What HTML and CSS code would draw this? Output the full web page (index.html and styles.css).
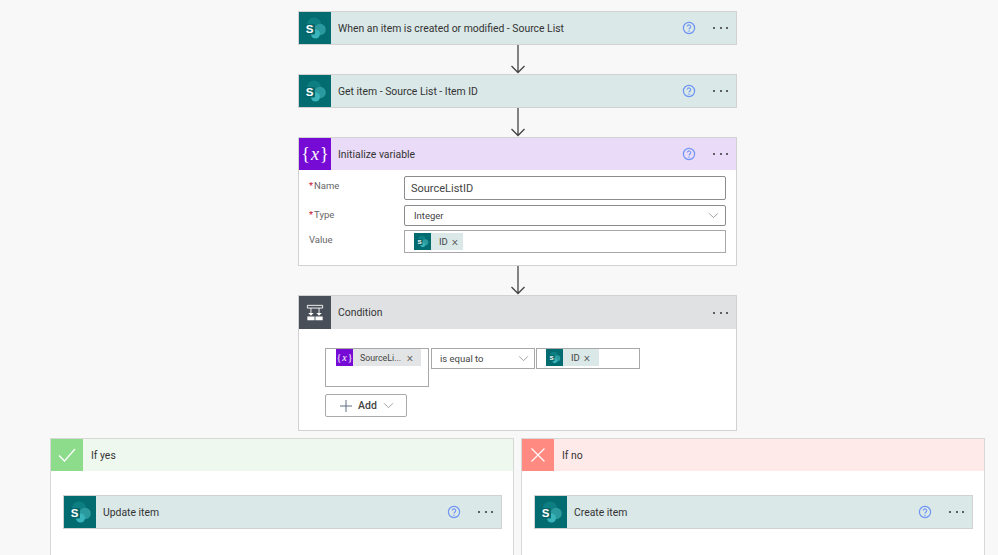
FILE: index.html
```html
<!DOCTYPE html>
<html lang="en">
<head>
    <meta charset="UTF-8">
    <meta name="viewport" content="width=device-width, initial-scale=1.0">
    <title>Flow editor</title>
    <link rel="stylesheet" href="styles.css">
</head>
<body>
    <svg class="defs" width="0" height="0">
        <symbol id="sp" viewBox="0 0 24 24">
            <circle cx="11" cy="8.500" r="7" fill="#0d7f83"/>
            <circle cx="17" cy="13.500" r="5.800" fill="#2a9a9f"/>
            <circle cx="12.500" cy="18" r="4.500" fill="#39b4ba"/>
            <rect x="1.500" y="8" width="10.500" height="10.500" rx="1" fill="#04666a"/>
        </symbol>
        <symbol id="help" viewBox="0 0 14 14">
            <circle cx="7" cy="7" r="5.600" fill="none" stroke="#6f94f5" stroke-width="1.200"/>
            <path d="M5.300 5.600a1.700 1.700 0 1 1 2.700 1.400c-.7.500-1 .8-1 1.600" fill="none" stroke="#6f94f5" stroke-width="1.100"/>
            <circle cx="7" cy="10.300" r=".7" fill="#6f94f5"/>
        </symbol>
        <symbol id="chev" viewBox="0 0 12 8">
            <path d="M1 1.500l5 5 5-5" fill="none" stroke="#8f9498" stroke-width="1"/>
        </symbol>
        <symbol id="arrow" viewBox="0 0 16 29">
            <path d="M8 0v27.500M1.500 21L8 27.500l6.500-6.500" fill="none" stroke="#444" stroke-width="1.300"/>
        </symbol>
    </svg>

    <div class="canvas">
        <section class="card sp">
            <header class="card-head">
                <span class="icon"><svg class="sp-logo" viewBox="0 0 24 24"><use href="#sp"/><text x="6.700" y="17.200" class="sp-s">S</text></svg></span>
                <span class="title">When an item is created or modified - Source List</span>
                <svg class="help"><use href="#help"/></svg>
                <span class="more"><i></i><i></i><i></i></span>
            </header>
        </section>
        <svg class="arrow"><use href="#arrow"/></svg>
        <section class="card sp">
            <header class="card-head">
                <span class="icon"><svg class="sp-logo" viewBox="0 0 24 24"><use href="#sp"/><text x="6.700" y="17.200" class="sp-s">S</text></svg></span>
                <span class="title">Get item - Source List - Item ID</span>
                <svg class="help"><use href="#help"/></svg>
                <span class="more"><i></i><i></i><i></i></span>
            </header>
        </section>
        <svg class="arrow"><use href="#arrow"/></svg>
        <section class="card variable">
            <header class="card-head">
                <span class="icon var-logo">{<em>x</em>}</span>
                <span class="title">Initialize variable</span>
                <svg class="help"><use href="#help"/></svg>
                <span class="more"><i></i><i></i><i></i></span>
            </header>
            <div class="form">
                <label class="req">Name</label>
                <div class="field field-name">SourceListID</div>
                <label class="req">Type</label>
                <div class="field field-type"><span>Integer</span><svg class="chev"><use href="#chev"/></svg></div>
                <label>Value</label>
                <div class="field field-value">
                    <span class="chip chip-sp"><span class="chip-icon"><svg viewBox="0 0 24 24"><use href="#sp"/><text x="6.700" y="17.200" class="sp-s">S</text></svg></span><span class="chip-text">ID</span><span class="chip-x">×</span></span>
                </div>
            </div>
        </section>
        <svg class="arrow"><use href="#arrow"/></svg>
        <section class="card condition">
            <header class="card-head">
                <span class="icon">
                    <svg class="cond-logo" viewBox="0 0 20 20">
                        <path d="M1.500 1.500h17v3h-17zM5.500 4.500v6M14.500 4.500v6" fill="none" stroke="#fff" stroke-width="1"/>
                        <path d="M2.500 10h6l-3 3zM11.500 10h6l-3 3z" fill="#fff"/>
                        <path d="M1.500 14h8v4h-8zM10.500 14h8v4h-8z" fill="#fff"/>
                    </svg>
                </span>
                <span class="title">Condition</span>
                <span class="more"><i></i><i></i><i></i></span>
            </header>
            <div class="cond-body">
                <div class="cond-row">
                    <div class="box box-left">
                        <span class="chip chip-var"><span class="chip-icon var-logo">{<em>x</em>}</span><span class="chip-text">SourceLi...</span><span class="chip-x">×</span></span>
                    </div>
                    <div class="box box-op"><span>is equal to</span><svg class="chev"><use href="#chev"/></svg></div>
                    <div class="box box-right">
                        <span class="chip chip-sp"><span class="chip-icon"><svg viewBox="0 0 24 24"><use href="#sp"/><text x="6.700" y="17.200" class="sp-s">S</text></svg></span><span class="chip-text">ID</span><span class="chip-x">×</span></span>
                    </div>
                </div>
                <button class="add" type="button">
                    <svg class="plus" viewBox="0 0 12 12"><path d="M6 0v12M0 6h12" stroke="#5f6f80" stroke-width="1"/></svg>
                    <span>Add</span>
                    <svg class="chev"><use href="#chev"/></svg>
                </button>
            </div>
        </section>

        <div class="branches">
            <section class="branch yes">
                <header class="branch-head">
                    <span class="branch-icon"><svg viewBox="0 0 18 14"><path d="M1 7.500l5.500 5.500L17 1" fill="none" stroke="#fff" stroke-width="1.200"/></svg></span>
                    <span class="title">If yes</span>
                </header>
                <div class="branch-body">
                    <section class="card sp">
                        <header class="card-head">
                            <span class="icon"><svg class="sp-logo" viewBox="0 0 24 24"><use href="#sp"/><text x="6.700" y="17.200" class="sp-s">S</text></svg></span>
                            <span class="title">Update item</span>
                            <svg class="help"><use href="#help"/></svg>
                            <span class="more"><i></i><i></i><i></i></span>
                        </header>
                    </section>
                </div>
            </section>
            <section class="branch no">
                <header class="branch-head">
                    <span class="branch-icon"><svg viewBox="0 0 14 14"><path d="M.5.500l13 13M13.500.500l-13 13" fill="none" stroke="#fff" stroke-width="1.100"/></svg></span>
                    <span class="title">If no</span>
                </header>
                <div class="branch-body">
                    <section class="card sp">
                        <header class="card-head">
                            <span class="icon"><svg class="sp-logo" viewBox="0 0 24 24"><use href="#sp"/><text x="6.700" y="17.200" class="sp-s">S</text></svg></span>
                            <span class="title">Create item</span>
                            <svg class="help"><use href="#help"/></svg>
                            <span class="more"><i></i><i></i><i></i></span>
                        </header>
                    </section>
                </div>
            </section>
        </div>
    </div>
</body>
</html>
```

FILE: styles.css
```css
html, body {
    margin: 0;
    height: 100%;
    overflow: hidden;
}

body {
    background-color: #f8f8f8;
    font-family: Roboto, "Noto Sans", sans-serif;
    font-size: 10px;
    color: #333;
}

.defs {
    display: block;
    height: 0;
}

.canvas {
    display: flex;
    flex-direction: column;
    align-items: center;
    width: 935px;
    margin-left: 50px;
    padding-top: 11px;
}

.arrow {
    display: block;
    width: 16px;
    height: 29px;
}

/* cards */
.card {
    width: 439px;
    box-sizing: border-box;
    border: 1px solid #d2d2d2;
    background-color: #fff;
}

.card-head {
    display: flex;
    align-items: center;
    height: 32px;
    padding-right: 8px;
}

.sp .card-head {
    background-color: #dae8e8;
}

.variable .card-head {
    background-color: #eadcf8;
}

.condition .card-head {
    background-color: #e0e1e3;
    height: 33px;
}

.icon {
    display: flex;
    align-items: center;
    justify-content: center;
    flex: none;
    width: 32px;
    height: 100%;
    margin-right: 7px;
    background-color: #036c70;
}

.sp-logo {
    width: 24px;
    height: 24px;
}

.sp-s {
    font-family: "Liberation Sans", sans-serif;
    font-size: 11.500px;
    font-weight: 700;
    text-anchor: middle;
    fill: #fff;
}

.icon.var-logo {
    background-color: #770bd6;
    color: #fff;
    font-family: "Liberation Serif", serif;
    font-size: 18px;
}

.var-logo em {
    padding: 0 1px;
}

.condition .icon {
    background-color: #484f58;
}

.cond-logo {
    width: 18px;
    height: 18px;
}

.title {
    flex: 1;
    font-size: 10.400px;
    color: #333;
}

.help {
    flex: none;
    width: 14px;
    height: 14px;
    margin-right: 17px;
}

.more {
    display: flex;
    flex: none;
    gap: 4.500px;
}

.more i {
    width: 2px;
    height: 2px;
    border-radius: 50%;
    background-color: #333;
}

/* form in Initialize variable */
.form {
    display: grid;
    grid-template-columns: 95px 1fr;
    grid-template-rows: 24px 21px 23px;
    row-gap: 4.500px;
    padding: 6px 10px 12px;
}

.form label {
    padding-top: 4px;
    font-size: 9.500px;
    color: #666;
}

.form .req::before {
    content: "*";
    margin-right: 1px;
    color: #c8102e;
}

.field {
    display: flex;
    align-items: center;
    box-sizing: border-box;
    border: 1px solid #8c8c8c;
    border-radius: 2px;
    background-color: #fff;
}

.field-name {
    padding-left: 6px;
    font-size: 11px;
    color: #444;
}

.field-type {
    justify-content: space-between;
    padding: 0 6px 0 9px;
    font-size: 9.500px;
    color: #444;
}

.field-value {
    border-color: #a8a8a8;
    border-radius: 0;
    padding-left: 9px;
}

.chev {
    width: 11px;
    height: 7px;
}

/* token chips */
.chip {
    display: flex;
    align-items: center;
    height: 17px;
    font-size: 9.500px;
    color: #444;
}

.chip-sp {
    background-color: #dae8e8;
}

.chip-var {
    background-color: #e3e4e5;
}

.field-value .chip {
    width: 49px;
}

.chip-icon {
    display: flex;
    align-items: center;
    justify-content: center;
    flex: none;
    width: 17px;
    height: 17px;
    background-color: #036c70;
}

.chip-icon svg {
    width: 13px;
    height: 13px;
}

.chip-icon.var-logo {
    background-color: #770bd6;
    color: #fff;
    font-family: "Liberation Serif", serif;
    font-size: 10px;
}

.chip-text {
    margin-left: 8px;
}

.chip-x {
    margin-left: 4px;
    margin-right: 5px;
    font-size: 12px;
    font-weight: 300;
    line-height: 1;
}

/* condition body */
.cond-body {
    padding: 19px 0 13px 26px;
}

.cond-row {
    display: flex;
    align-items: flex-start;
    gap: 2px;
}

.box {
    box-sizing: border-box;
    width: 104px;
    height: 21px;
    border: 1px solid #a8a8a8;
    background-color: #fff;
    font-size: 9.500px;
    color: #444;
}

.box-left {
    height: 39px;
    padding-left: 10px;
}

.box-left .chip {
    width: 85px;
}

.box-left .chip-text {
    flex: 1;
    margin-left: 7px;
    font-size: 8.800px;
}

.box-left .chip-x {
    margin-right: 8px;
}

.box-op {
    display: flex;
    align-items: center;
    justify-content: space-between;
    padding: 0 5px 0 8px;
}

.box-right {
    margin-left: -1px;
    padding-left: 9px;
}

.box-right .chip {
    width: 53px;
}

.add {
    display: flex;
    align-items: center;
    box-sizing: border-box;
    width: 82px;
    height: 23px;
    margin-top: 7px;
    padding: 0 0 0 14px;
    border: 1px solid #aaa;
    border-radius: 2px;
    background-color: #fff;
    font-family: inherit;
    font-size: 10.500px;
    font-weight: 500;
    color: #444;
}

.plus {
    width: 12px;
    height: 12px;
    margin-right: 6px;
}

.add .chev {
    margin-left: 6px;
}

/* branches */
.branches {
    display: flex;
    gap: 7px;
    width: 100%;
    margin-top: 7px;
}

.branch {
    flex: 1;
    height: 116px;
    border: 1px solid #d8d8d8;
    border-bottom: 0;
    background-color: #fff;
}

.branch-head {
    display: flex;
    align-items: center;
    height: 32px;
}

.branch-icon {
    display: flex;
    align-items: center;
    justify-content: center;
    flex: none;
    width: 32px;
    height: 100%;
    margin-right: 8px;
}

.yes .branch-head {
    background-color: #eef8ef;
}

.yes .branch-icon {
    background-color: #8cdc8c;
}

.yes .branch-icon svg {
    width: 18px;
    height: 14px;
}

.no .branch-head {
    background-color: #ffeaea;
}

.no .branch-icon {
    background-color: #ff8a82;
}

.no .branch-icon svg {
    width: 14px;
    height: 14px;
}

.branch-body {
    padding: 24px 0 0 12px;
}
```
